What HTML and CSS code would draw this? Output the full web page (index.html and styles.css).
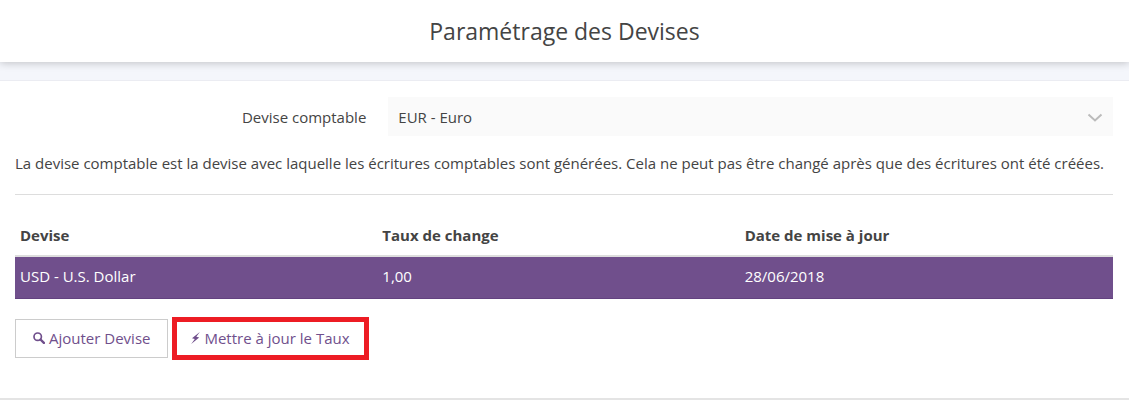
FILE: index.html
```html
<!DOCTYPE html>
<html lang="fr">
<head>
<meta charset="utf-8">
<title>Paramétrage des Devises</title>
<link rel="stylesheet" href="styles.css">
</head>
<body>
<header class="header"><h1 class="title">Paramétrage des Devises</h1></header>
<main class="panel">
  <div class="field">
    <label class="field-label" for="currency">Devise comptable</label>
    <div class="select-wrap">
      <select class="select" id="currency"><option>EUR - Euro</option></select>
      <svg class="chevron" viewBox="0 0 16 10" width="16" height="10" aria-hidden="true"><path d="M1.5 1.5l6.5 6 6.5-6"/></svg>
    </div>
  </div>
  <p class="help">La devise comptable est la devise avec laquelle les écritures comptables sont générées. Cela ne peut pas être changé après que des écritures ont été créées.</p>
  <table class="rates">
    <thead><tr><th class="col">Devise</th><th class="col">Taux de change</th><th>Date de mise à jour</th></tr></thead>
    <tbody><tr><td>USD - U.S. Dollar</td><td>1,00</td><td>28/06/2018</td></tr></tbody>
  </table>
  <div class="actions">
    <button class="button" type="button"><svg class="icon" viewBox="0 0 12 12" width="12" height="12" aria-hidden="true"><circle cx="4.7" cy="4.7" r="3.7" fill="none" stroke="currentColor" stroke-width="1.7"/><path d="M7.5 7.5l3.4 3.4" stroke="currentColor" stroke-width="2.4" stroke-linecap="round"/></svg>Ajouter Devise</button>
    <button class="button button-highlight" type="button"><svg class="icon" viewBox="0 0 9 12" width="9" height="12" aria-hidden="true"><path d="M8.8 0L1 6.2l2.8.8L.2 12l8-6.5-2.9-.8z" fill="currentColor"/></svg>Mettre à jour le Taux</button>
  </div>
</main>
</body>
</html>
```

FILE: styles.css
```css
* { box-sizing: border-box; }
body {
  margin: 0;
  background: #f4f6fb;
  color: #444;
  font: 15px/20px "Open Sans", sans-serif;
}
.header {
  position: relative;
  padding: 16px;
  background: #fff;
  box-shadow: 0 1px 8px rgba(0, 0, 0, .22);
  text-align: center;
}
.title { margin: 0; font-size: 23px; line-height: 30px; font-weight: 400; }
.panel {
  margin-top: 18px;
  padding: 16px 16px 40px 15px;
  border-top: 1px solid #ebecf2;
  border-bottom: 2px solid #e4e4e4;
  background: #fff;
}
.field { display: flex; align-items: center; }
.field-label { width: 34%; padding-right: 22px; text-align: right; }
.select-wrap { position: relative; flex: 1; }
.select {
  display: block;
  width: 100%;
  height: 39px;
  padding: 0 10px;
  border: 0;
  border-radius: 0;
  appearance: none;
  background: #fafafa;
  color: inherit;
  font: inherit;
}
.chevron {
  position: absolute;
  top: 16px;
  right: 10px;
  fill: none;
  stroke: #bbb;
  stroke-width: 2;
  pointer-events: none;
}
.help { margin: 0; padding: 17px 0 21px; border-bottom: 1px solid #ddd; }
.rates {
  width: 100%;
  margin-top: 20px;
  border-spacing: 0;
  table-layout: fixed;
  text-align: left;
}
.col { width: 33%; }
.rates th { padding: 10px 5px; border-bottom: 2px solid #ddd; font-weight: 700; }
.rates td {
  padding: 9px 5px 12px;
  border-bottom: 1px solid #634280;
  background: #704f8c;
  color: #fff;
}
.actions { display: flex; gap: 6px; margin-top: 20px; }
.button {
  display: flex;
  align-items: center;
  justify-content: center;
  gap: 4px;
  height: 39px;
  padding: 0 17px 2px;
  border: 1px solid #ccc;
  background: #fff;
  color: #704f8c;
  font: inherit;
}
.button-highlight {
  padding: 0 14px 2px;
  border: 3px solid #ed1c24;
  outline: 2px solid #ed1c24;
}
```
